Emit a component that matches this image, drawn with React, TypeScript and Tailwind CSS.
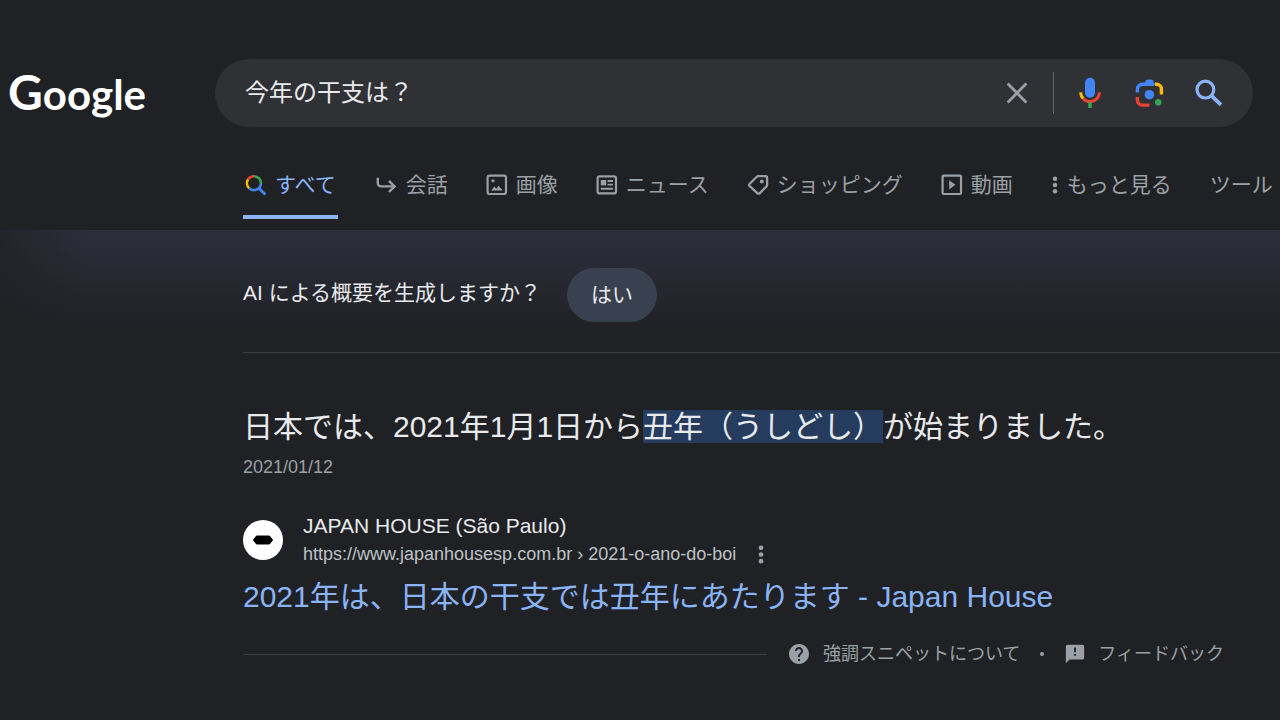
import type { ReactNode } from 'react';

function GoogleSearchMark() {
  return (
    <svg viewBox="0 0 22 22" className="size-[22px]" fill="none" strokeWidth="2.6" aria-hidden="true">
      <path d="M2.9 5.5A7 7 0 0 1 9 2.2" stroke="#ea4335" />
      <path d="M9 2.2a7 7 0 0 1 6.9 7.6" stroke="#34a853" />
      <path d="M2.9 5.5a7 7 0 0 0 1.3 8.7" stroke="#fbbc04" />
      <path d="M4.2 14.2a7 7 0 0 0 11.7-4.4" stroke="#4285f4" />
      <path d="M13.6 14 20.4 20.6" stroke="#4285f4" strokeWidth="2.8" />
    </svg>
  );
}

function ReplyArrow() {
  return (
    <svg viewBox="0 0 22 22" className="size-[22px]" fill="none" stroke="currentColor" strokeWidth="2.4" aria-hidden="true">
      <path d="M1.8 4.8v4.4a3.2 3.2 0 0 0 3.2 3.2h13" strokeLinecap="round" />
      <path d="m13 6.8 5.6 5.6-5.6 5.6" />
    </svg>
  );
}

function ImageIcon() {
  return (
    <svg viewBox="0 0 22 22" className="size-[22px]" fill="none" stroke="currentColor" strokeWidth="2.2" aria-hidden="true">
      <rect x="1.6" y="1.6" width="18.4" height="18.4" rx="2" />
      <path d="m5.2 16.6 3.2-4.2 2 2.4 2.2-3 4 4.8z" fill="currentColor" stroke="none" />
      <circle cx="7" cy="6.8" r="1.6" fill="currentColor" stroke="none" />
    </svg>
  );
}

function NewsIcon() {
  return (
    <svg viewBox="0 0 22 22" className="size-[22px]" fill="none" stroke="currentColor" strokeWidth="2.2" aria-hidden="true">
      <rect x="1.6" y="2.4" width="18.4" height="17" rx="2" />
      <rect x="4.8" y="6" width="5.4" height="5.4" fill="currentColor" stroke="none" />
      <path d="M11.6 7h5.4M11.6 10.6h5.4M4.8 14.8H17" strokeWidth="1.9" />
    </svg>
  );
}

function TagIcon() {
  return (
    <svg viewBox="0 0 22 22" className="size-[22px]" fill="none" stroke="currentColor" strokeWidth="2.3" strokeLinejoin="round" aria-hidden="true">
      <path d="M11.3 2.2h7.2a1.6 1.6 0 0 1 1.6 1.6V11a2 2 0 0 1-.6 1.4l-6.6 6.7a1.8 1.8 0 0 1-2.6 0l-7.6-7a1.7 1.7 0 0 1 0-2.4l7.1-6.9a2 2 0 0 1 1.5-.6z" />
      <circle cx="14.8" cy="7.6" r="2" fill="currentColor" stroke="none" />
    </svg>
  );
}

function VideoIcon() {
  return (
    <svg viewBox="0 0 22 22" className="size-[22px]" fill="none" stroke="currentColor" strokeWidth="2.2" aria-hidden="true">
      <rect x="1.6" y="1.6" width="18.4" height="18.4" rx="1" />
      <path d="M8.2 6.2v9.2l6.2-4.6z" fill="currentColor" stroke="none" />
    </svg>
  );
}

function Dots({ className }: { className: string }) {
  return (
    <svg viewBox="0 0 6 20" className={className} fill="currentColor" aria-hidden="true">
      <circle cx="3" cy="3" r="2.5" />
      <circle cx="3" cy="10" r="2.5" />
      <circle cx="3" cy="17" r="2.5" />
    </svg>
  );
}

function ClearIcon() {
  return (
    <svg viewBox="0 0 22 22" className="size-[22px]" fill="none" stroke="currentColor" strokeWidth="2.8" aria-hidden="true">
      <path d="m1.6 1.6 18.8 18.8M20.4 1.6 1.6 20.4" />
    </svg>
  );
}

function MicIcon() {
  return (
    <svg viewBox="0 0 24 32" className="h-8 w-6" fill="none" strokeWidth="3" aria-hidden="true">
      <rect x="7" y="0.8" width="10" height="20" rx="5" fill="#4285f4" />
      <path d="M2.6 15.4a9.5 9.5 0 0 0 2.8 6.4" stroke="#fbbc04" />
      <path d="M5.1 21.6a9.5 9.5 0 0 0 16.3-6.2" stroke="#ea4335" />
      <path d="M12 25.4V31" stroke="#34a853" strokeWidth="3.4" />
    </svg>
  );
}

function LensIcon() {
  return (
    <svg viewBox="0 0 29 29" className="size-[29px]" fill="none" strokeWidth="3.4" aria-hidden="true">
      <path d="M20 5.3h1.6a4.8 4.8 0 0 1 4.8 4.8v5.4" stroke="#fbbc04" />
      <path d="M2.4 13.6v-3.3a5 5 0 0 1 5-5H19" stroke="#4285f4" />
      <path d="M8.6 6 11 1.6A2.4 2.4 0 0 1 13 .4h3a2.4 2.4 0 0 1 2 1.2L20.4 6z" fill="#4285f4" />
      <path d="M2.4 18v3.1a5 5 0 0 0 5 5h7" stroke="#ea4335" />
      <circle cx="14.4" cy="15.7" r="4.8" fill="#4285f4" />
      <circle cx="23.2" cy="23.2" r="3.2" fill="#34a853" />
    </svg>
  );
}

function SearchIcon() {
  return (
    <svg viewBox="0 0 28 28" className="size-7" fill="none" stroke="#8ab4f8" strokeWidth="3.2" aria-hidden="true">
      <circle cx="10.4" cy="10.6" r="8.4" />
      <path d="m16.6 16.8 9.4 9" strokeWidth="3.8" />
    </svg>
  );
}

function HelpIcon() {
  return (
    <svg viewBox="0 0 24 24" className="size-6" fill="currentColor" aria-hidden="true">
      <path d="M12 2C6.48 2 2 6.48 2 12s4.48 10 10 10 10-4.48 10-10S17.52 2 12 2zm1 17h-2v-2h2v2zm2.07-7.75-.9.92C13.45 12.9 13 13.5 13 15h-2v-.5c0-1.1.45-2.1 1.17-2.83l1.24-1.26c.37-.36.59-.86.59-1.41 0-1.1-.9-2-2-2s-2 .9-2 2H8c0-2.21 1.79-4 4-4s4 1.79 4 4c0 .88-.36 1.68-.93 2.25z" />
    </svg>
  );
}

function FeedbackIcon() {
  return (
    <svg viewBox="0 0 24 24" className="size-[22px]" fill="currentColor" aria-hidden="true">
      <path d="M20 2H4c-1.1 0-1.99.9-1.99 2L2 22l4-4h14c1.1 0 2-.9 2-2V4c0-1.1-.9-2-2-2zm-7 12h-2v-2h2v2zm0-4h-2V5h2v5z" />
    </svg>
  );
}

const tabs: { label: string; icon: ReactNode }[] = [
  { label: '会話', icon: <ReplyArrow /> },
  { label: '画像', icon: <ImageIcon /> },
  { label: 'ニュース', icon: <NewsIcon /> },
  { label: 'ショッピング', icon: <TagIcon /> },
  { label: '動画', icon: <VideoIcon /> },
];

export default function App() {
  return (
    <div
      lang="ja"
      className="min-h-screen overflow-x-hidden bg-[#202124] font-['Liberation_Sans','Noto_Sans_CJK_JP',sans-serif] text-[#e8eaed]"
    >
      <header>
        <div className="flex items-center pt-[59px] pr-[27px]">
          <a href="#home" className="w-[215px] shrink-0 pl-2 font-['Lato',sans-serif] text-[42px] leading-[60px] font-bold text-white">
            <span className="text-5xl leading-[60px]">G</span>oogle
          </a>
          <form
            role="search"
            onSubmit={(e) => e.preventDefault()}
            className="flex h-[68px] flex-1 items-center rounded-full bg-[#303134] pr-[30px] pl-[30px]"
          >
            <input
              type="text"
              aria-label="検索"
              defaultValue="今年の干支は？"
              className="min-w-0 flex-1 bg-transparent text-2xl outline-none"
            />
            <button type="button" aria-label="クリア" className="text-[#9aa0a6]">
              <ClearIcon />
            </button>
            <span className="mr-6 ml-[25px] h-[42px] w-px bg-[#5f6368]" />
            <button type="button" aria-label="音声で検索">
              <MicIcon />
            </button>
            <button type="button" aria-label="画像で検索" className="ml-[33px]">
              <LensIcon />
            </button>
            <button type="submit" aria-label="検索を実行" className="ml-[31px]">
              <SearchIcon />
            </button>
          </form>
        </div>
        <nav className="flex h-[103px] items-start gap-[38px] pt-9 pl-[243px] text-[21px] leading-[44px] whitespace-nowrap text-[#9aa0a6]">
          <a href="#all" aria-current="page" className="flex h-14 items-center gap-2 border-b-4 border-[#8ab4f8] pr-0.5 pb-2 pl-0.5 text-[#8ab4f8]">
            <GoogleSearchMark />
            すべて
          </a>
          {tabs.map((t) => (
            <a key={t.label} href={`#${t.label}`} className="flex items-center gap-2">
              {t.icon}
              {t.label}
            </a>
          ))}
          <button type="button" className="flex items-center gap-2">
            <Dots className="h-[18px] w-2" />
            もっと見る
          </button>
          <button type="button">ツール</button>
        </nav>
      </header>

      <section className="bg-[linear-gradient(to_right,#202124b0_0px,#20212400_90px),linear-gradient(to_bottom,#2c2e3c,#202124_105px)] pl-[243px]">
        <div className="flex items-start gap-[26px] border-b border-[#3c4043] pt-[38px] pb-[30px]">
          <p className="text-[21px] leading-[50px]">AI による概要を生成しますか？</p>
          <button type="button" className="h-[54px] rounded-full bg-[#394050] px-6 text-[21px]">
            はい
          </button>
        </div>
      </section>

      <main className="pr-14 pl-[243px]">
        <h2 className="pt-[52px] text-[30px] leading-[44px] whitespace-nowrap">
          日本では、2021年1月1日から
          <mark className="bg-[linear-gradient(#263c5f,#263c5f)] bg-[length:100%_34px] bg-center bg-no-repeat text-[#e8eaed]">
            丑年（うしどし）
          </mark>
          が始まりました。
        </h2>
        <p className="pt-1.5 text-lg leading-6 text-[#9aa0a6]">2021/01/12</p>

        <div className="flex items-center pt-[33px]">
          <span className="grid size-10 place-items-center rounded-full bg-white">
            <svg viewBox="0 0 22 10" className="h-[10px] w-[22px]" aria-hidden="true">
              <path d="M4.5 1h13L20.6 5l-3.1 4h-13L1.4 5z" fill="#000" stroke="#000" strokeLinejoin="round" />
            </svg>
          </span>
          <div className="ml-5">
            <p className="text-[21px] leading-7">JAPAN HOUSE (São Paulo)</p>
            <div className="flex items-center gap-5 text-lg leading-7 text-[#bdc1c6]">
              <cite className="not-italic">https://www.japanhousesp.com.br › 2021-o-ano-do-boi</cite>
              <button type="button" aria-label="この結果について" className="text-[#9aa0a6]">
                <Dots className="h-[19px] w-2.5" />
              </button>
            </div>
          </div>
        </div>
        <h3 className="pt-[7px] text-[30px] leading-[44px] whitespace-nowrap text-[#8ab4f8]">
          <a href="#result">2021年は、日本の干支では丑年にあたります - Japan House</a>
        </h3>

        <footer className="flex items-center pt-[21px] text-lg leading-7 whitespace-nowrap text-[#9aa0a6]">
          <span className="h-px flex-1 bg-[#3c4043]" />
          <a href="#about" className="ml-5 flex items-center gap-3">
            <HelpIcon />
            強調スニペットについて
          </a>
          <span className="mx-5 size-1 rounded-full bg-[#9aa0a6]" />
          <a href="#feedback" className="flex items-center gap-3">
            <FeedbackIcon />
            フィードバック
          </a>
        </footer>
      </main>
    </div>
  );
}
